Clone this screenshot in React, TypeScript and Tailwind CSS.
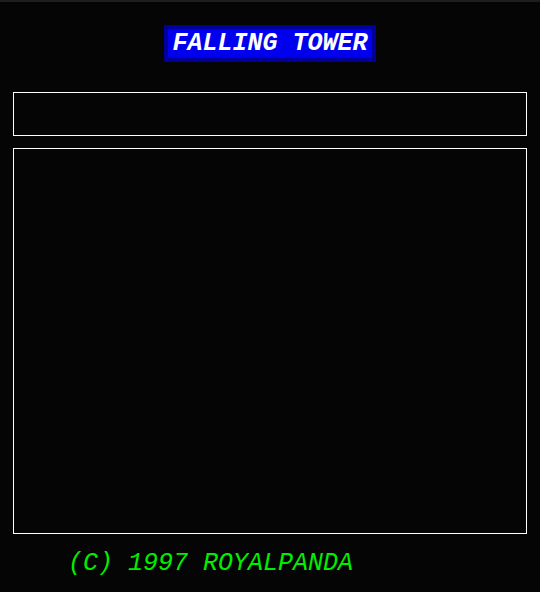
export default function App() {
  const mono = { fontFamily: '"Liberation Mono", "Courier New", monospace' };
  return (
    <div className="h-[592px] w-[540px] overflow-hidden bg-[#050505] border-t-2 border-[#1e1e1e]" style={mono}>
      {/* title */}
      <div className="flex justify-center pt-[23px]">
        <div className="border-4 border-[#000099] bg-[#0000ee] px-[4px] h-[37px] flex items-center">
          <span className="text-[25px] italic font-bold text-white leading-none">FALLING TOWER</span>
        </div>
      </div>

      {/* status bar */}
      <div className="mx-[13px] mt-[30px] h-[44px] border border-white" />

      {/* play field */}
      <div className="mx-[13px] mt-[12px] h-[386px] border border-white" />

      {/* footer */}
      <div className="pl-[68px] pt-[17px] text-[25px] italic text-[#00ee00] leading-none">
        (C) 1997 ROYALPANDA
      </div>
    </div>
  );
}
